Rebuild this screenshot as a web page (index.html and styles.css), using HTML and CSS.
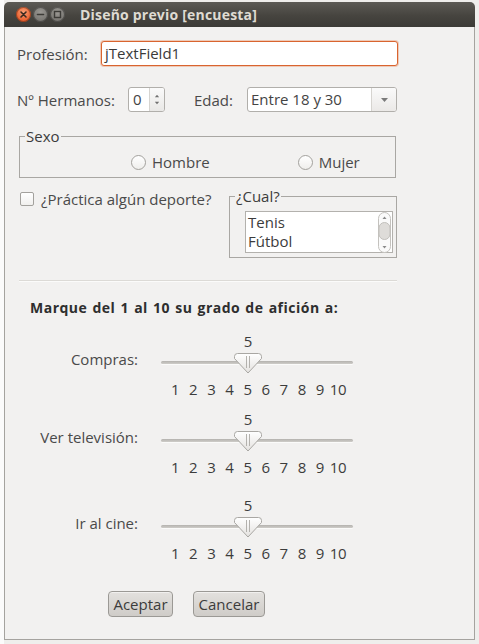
FILE: index.html
```html
<!DOCTYPE html>
<html lang="es">
<head>
<meta charset="utf-8">
<title>Diseño previo [encuesta]</title>
<link rel="stylesheet" href="styles.css">
</head>
<body>
<div class="desk">
  <div class="window">
    <div class="titlebar">
      <div class="wbtns">
        <span class="wb close">
          <svg width="15" height="15" viewBox="0 0 15 15"><path d="M5 5 L10 10 M10 5 L5 10" stroke="#3a2a20" stroke-width="1.6" stroke-linecap="round"/></svg>
        </span>
        <span class="wb grey">
          <svg width="15" height="15" viewBox="0 0 15 15"><path d="M4.5 7.5 H10.5" stroke="#3c3b37" stroke-width="1.6" stroke-linecap="round"/></svg>
        </span>
        <span class="wb grey">
          <svg width="15" height="15" viewBox="0 0 15 15"><rect x="4.5" y="4.5" width="6" height="6" fill="none" stroke="#3c3b37" stroke-width="1.4"/></svg>
        </span>
      </div>
      <div class="title">Diseño previo [encuesta]</div>
    </div>

    <div class="content">
      <div class="row r1">
        <span class="lbl lbl-prof">Profesión:</span>
        <div class="textfield">jTextField1</div>
      </div>

      <div class="row r2">
        <span class="lbl lbl-herm">Nº Hermanos:</span>
        <div class="spinner">
          <span class="spin-val">0</span>
          <span class="spin-btns">
            <svg width="16" height="23" viewBox="0 0 16 23"><path d="M5.5 9 L8 6 L10.5 9 Z" fill="#707070"/><path d="M5.5 14 L8 17 L10.5 14 Z" fill="#707070"/></svg>
          </span>
        </div>
        <span class="lbl lbl-edad">Edad:</span>
        <div class="combo">
          <span class="combo-val">Entre 18 y 30</span>
          <span class="combo-btn">
            <svg width="9" height="6" viewBox="0 0 9 6"><path d="M1 1 H8 L4.5 5 Z" fill="#7a7a7a"/></svg>
          </span>
        </div>
      </div>

      <div class="group sexo">
        <span class="legend">Sexo</span>
        <div class="radios">
          <label class="radio r-h"><span class="circ"></span>Hombre</label>
          <label class="radio r-m"><span class="circ"></span>Mujer</label>
        </div>
      </div>

      <div class="row r4">
        <label class="check"><span class="box"></span>¿Práctica algún deporte?</label>
        <div class="group cual">
          <span class="legend">¿Cual?</span>
          <div class="listbox">
            <ul class="items">
              <li>Tenis</li>
              <li>Fútbol</li>
            </ul>
            <div class="vscroll">
              <svg width="15" height="41" viewBox="0 0 15 41">
                <rect x="1.5" y="0.5" width="12" height="40" rx="6" fill="#fafafa" stroke="#c4c2be"/>
                <path d="M5.5 7 L7.5 4.5 L9.5 7 Z" fill="#8a8a8a"/>
                <rect x="2" y="10.5" width="11" height="17" rx="5.5" fill="#dedcd9" stroke="#c2c0bc"/>
                <path d="M5.5 34 L7.5 36.5 L9.5 34 Z" fill="#8a8a8a"/>
              </svg>
            </div>
          </div>
        </div>
      </div>

      <div class="sep"></div>

      <div class="heading">Marque del 1 al 10 su grado de afición a:</div>

      <div class="srow s1">
        <span class="slbl">Compras:</span>
        <div class="slider">
          <div class="sval">5</div>
          <div class="rail">
            <div class="line"></div>
            <svg class="thumb" width="28" height="21" viewBox="0 0 28 21">
              <defs><linearGradient id="tg1" x1="0" y1="0" x2="0" y2="1"><stop offset="0" stop-color="#ffffff"/><stop offset="1" stop-color="#e4e2df"/></linearGradient></defs>
              <path d="M3.5 0.5 H24.5 Q27.5 0.5 27.5 3.5 V5.5 L14 20 L0.5 5.5 V3.5 Q0.5 0.5 3.5 0.5 Z" fill="url(#tg1)" stroke="#a9a7a3"/>
              <path d="M12.5 3 V15 M15.5 3 V15" stroke="#b3b1ad" stroke-width="1"/>
            </svg>
          </div>
          <div class="ticks"><span>1</span><span>2</span><span>3</span><span>4</span><span>5</span><span>6</span><span>7</span><span>8</span><span>9</span><span>10</span></div>
        </div>
      </div>

      <div class="srow s2">
        <span class="slbl">Ver televisión:</span>
        <div class="slider">
          <div class="sval">5</div>
          <div class="rail">
            <div class="line"></div>
            <svg class="thumb" width="28" height="21" viewBox="0 0 28 21">
              <defs><linearGradient id="tg2" x1="0" y1="0" x2="0" y2="1"><stop offset="0" stop-color="#ffffff"/><stop offset="1" stop-color="#e4e2df"/></linearGradient></defs>
              <path d="M3.5 0.5 H24.5 Q27.5 0.5 27.5 3.5 V5.5 L14 20 L0.5 5.5 V3.5 Q0.5 0.5 3.5 0.5 Z" fill="url(#tg2)" stroke="#a9a7a3"/>
              <path d="M12.5 3 V15 M15.5 3 V15" stroke="#b3b1ad" stroke-width="1"/>
            </svg>
          </div>
          <div class="ticks"><span>1</span><span>2</span><span>3</span><span>4</span><span>5</span><span>6</span><span>7</span><span>8</span><span>9</span><span>10</span></div>
        </div>
      </div>

      <div class="srow s3">
        <span class="slbl">Ir al cine:</span>
        <div class="slider">
          <div class="sval">5</div>
          <div class="rail">
            <div class="line"></div>
            <svg class="thumb" width="28" height="21" viewBox="0 0 28 21">
              <defs><linearGradient id="tg3" x1="0" y1="0" x2="0" y2="1"><stop offset="0" stop-color="#ffffff"/><stop offset="1" stop-color="#e4e2df"/></linearGradient></defs>
              <path d="M3.5 0.5 H24.5 Q27.5 0.5 27.5 3.5 V5.5 L14 20 L0.5 5.5 V3.5 Q0.5 0.5 3.5 0.5 Z" fill="url(#tg3)" stroke="#a9a7a3"/>
              <path d="M12.5 3 V15 M15.5 3 V15" stroke="#b3b1ad" stroke-width="1"/>
            </svg>
          </div>
          <div class="ticks"><span>1</span><span>2</span><span>3</span><span>4</span><span>5</span><span>6</span><span>7</span><span>8</span><span>9</span><span>10</span></div>
        </div>
      </div>

      <div class="buttons">
        <button class="btn btn-ok">Aceptar</button>
        <button class="btn btn-cancel">Cancelar</button>
      </div>
    </div>
  </div>
</div>
</body>
</html>
```

FILE: styles.css
```css
* { box-sizing: border-box; }
html, body { margin: 0; padding: 0; }
body {
  width: 479px;
  height: 644px;
  overflow: hidden;
  background: #efeeec;
  font-family: "Open Sans", "DejaVu Sans", sans-serif;
  font-size: 15px;
  color: #444;
}
.desk {
  height: 644px;
  display: flex;
  align-items: flex-start;
  background:
    linear-gradient(to right, #fbfbfb 0, #fbfbfb 4px, transparent 4px),
    #efeeec;
}
.window {
  margin-left: 4px;
  margin-top: 2px;
  width: 471px;
  height: 638px;
  display: flex;
  flex-direction: column;
}
.titlebar {
  height: 25px;
  flex: none;
  display: flex;
  align-items: center;
  border-radius: 5px 5px 0 0;
  background: linear-gradient(to bottom, #5c5a55 0%, #46443f 55%, #3c3b37 100%);
  padding-left: 12px;
}
.wbtns { display: flex; gap: 2px; }
.wb {
  width: 15px;
  height: 15px;
  border-radius: 50%;
  display: flex;
}
.wb.close {
  background: radial-gradient(circle at 50% 35%, #f8a077 0%, #ec6a3a 55%, #d4481a 100%);
  box-shadow: inset 0 0 0 1px rgba(80, 30, 10, 0.45);
}
.wb.grey {
  background: radial-gradient(circle at 50% 35%, #9a9893 0%, #7d7b76 60%, #66645f 100%);
  box-shadow: inset 0 0 0 1px rgba(30, 30, 30, 0.45);
}
.title {
  margin-left: 15px;
  color: #dfdbd2;
  font-weight: 700;
  font-size: 14px;
  letter-spacing: 0.2px;
  line-height: 18px;
}
.content {
  flex: 1;
  background: #f2f1f0;
  border: 1px solid #a5a39f;
  border-top: none;
  padding-left: 12px;
  display: flex;
  flex-direction: column;
}
.row { display: flex; align-items: center; }
.lbl { color: #4a4a4a; line-height: 20px; }
.r1 { margin-top: 14px; height: 25px; }
.lbl-prof { width: 84px; }
.textfield {
  width: 297px;
  height: 25px;
  line-height: 23px;
  background: #fff;
  border: 1px solid #d9642f;
  border-radius: 3px;
  box-shadow: 0 0 0 1px rgba(231, 128, 80, 0.35);
  padding-left: 3px;
  color: #3a3a3a;
}
.r2 { margin-top: 21px; height: 25px; }
.lbl-herm { width: 111px; white-space: nowrap; }
.spinner {
  width: 37px;
  height: 25px;
  display: flex;
  border: 1px solid #b1afab;
  border-radius: 3px;
  background: #fff;
  overflow: hidden;
}
.spin-val { width: 20px; padding-left: 4px; line-height: 23px; }
.spin-btns {
  width: 15px;
  border-left: 1px solid #d6d4d0;
  background: linear-gradient(to bottom, #fafafa, #e9e8e6);
  display: flex;
}
.lbl-edad { margin-left: 29px; width: 53px; }
.combo {
  width: 150px;
  height: 25px;
  display: flex;
  border: 1px solid #b1afab;
  border-radius: 3px;
  background: #fff;
  overflow: hidden;
}
.combo-val { flex: 1; padding-left: 3px; line-height: 23px; white-space: nowrap; }
.combo-btn {
  width: 25px;
  flex: none;
  border-left: 1px solid #d6d4d0;
  background: linear-gradient(to bottom, #fafafa, #ebe9e7);
  display: flex;
  align-items: center;
  justify-content: center;
}
.group {
  position: relative;
  border: 1px solid #a9a7a3;
}
.legend {
  position: absolute;
  top: -11px;
  left: 5px;
  background: #f2f1f0;
  line-height: 20px;
  padding: 0 1px;
  color: #3c3c3c;
}
.sexo {
  margin-top: 24px;
  margin-left: 2px;
  width: 377px;
  height: 42px;
}
.radios {
  display: flex;
  margin-top: 16px;
  height: 18px;
  align-items: center;
}
.radio { display: flex; align-items: center; color: #4a4a4a; line-height: 18px; }
.circ {
  width: 15px;
  height: 15px;
  border-radius: 50%;
  border: 1px solid #a3a19d;
  background: linear-gradient(to bottom, #ffffff, #efeeec);
  margin-right: 6px;
}
.r-h { margin-left: 111px; }
.r-m { margin-left: 88px; }
.r4 { margin-top: 14px; align-items: flex-start; }
.check {
  display: flex;
  align-items: center;
  margin-left: 3px;
  height: 13px;
  width: 209px;
  color: #4a4a4a;
  white-space: nowrap;
}
.box {
  width: 14px;
  height: 14px;
  border: 1px solid #a3a19d;
  border-radius: 2px;
  background: linear-gradient(to bottom, #ffffff, #f1f0ee);
  margin-right: 7px;
  flex: none;
}
.cual {
  margin-top: 4px;
  width: 168px;
  height: 62px;
}
.listbox {
  margin-top: 14px;
  margin-left: 15px;
  width: 148px;
  height: 42px;
  border: 1px solid #b3b1ad;
  background: #fff;
  display: flex;
}
.items {
  list-style: none;
  margin: 0;
  padding: 1px 0 0 2px;
  flex: 1;
  color: #3c3c3c;
}
.items li { line-height: 19px; }
.vscroll { width: 15px; display: flex; }
.sep {
  margin-top: 22px;
  margin-left: 2px;
  width: 378px;
  height: 1px;
  background: #dcdad6;
  box-shadow: 0 1px 0 #fbfbfa;
}
.heading {
  margin-top: 18px;
  margin-left: 13px;
  line-height: 18px;
  font-weight: 700;
  font-size: 14px;
  color: #2e2e2e;
  letter-spacing: 0.5px;
  word-spacing: 1px;
  white-space: nowrap;
}
.srow {
  display: grid;
  grid-template-columns: 121px 192px;
  column-gap: 23px;
}
.s1 { margin-top: 16px; }
.s2 { margin-top: 14px; }
.s3 { margin-top: 22px; }
.slbl {
  text-align: right;
  padding-top: 17px;
  line-height: 18px;
  color: #4a4a4a;
  white-space: nowrap;
}
.slider { height: 64px; display: flex; flex-direction: column; }
.sval { width: 174px; text-align: center; line-height: 16px; height: 16px; color: #3c3c3c; }
.rail { height: 32px; position: relative; }
.line {
  margin-top: 12px;
  height: 3px;
  border-radius: 2px;
  background: linear-gradient(to bottom, #b4b2ae, #cfcdc9);
  box-shadow: 0 1px 0 #fbfbfa;
}
.thumb { position: absolute; left: 73px; top: 4px; }
.ticks { display: flex; padding-left: 5px; line-height: 16px; height: 16px; }
.ticks span { width: 18.1px; text-align: center; flex: none; color: #3c3c3c; letter-spacing: -0.5px; }
.buttons { margin-top: 30px; margin-left: 91px; display: flex; gap: 20px; }
.btn {
  height: 26px;
  font-family: "Open Sans", "DejaVu Sans", sans-serif;
  font-size: 15px;
  color: #3c3c3c;
  border: 1px solid #9b9995;
  border-radius: 4px;
  background: linear-gradient(to bottom, #e3e1de, #cfccc8);
  padding: 0;
  box-shadow: inset 0 1px 0 rgba(255,255,255,0.5);
}
.btn-ok { width: 65px; }
.btn-cancel { width: 72px; }
```
